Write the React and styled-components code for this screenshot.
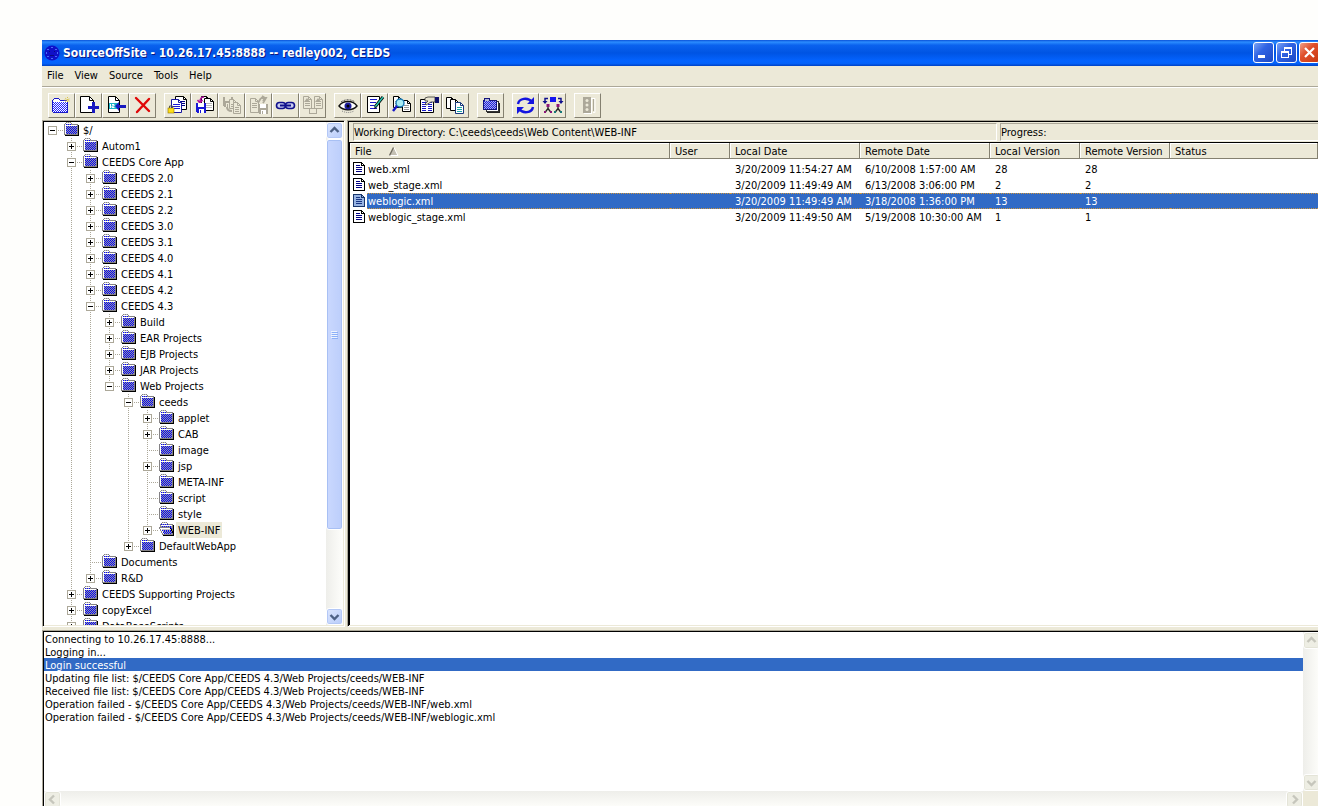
import React, { useState } from "react";
import styled, { createGlobalStyle, css } from "styled-components";

const menus = ["File", "View", "Source", "Tools", "Help"];

const columns = [
  { key: "file", text: "File", width: 320 },
  { key: "user", text: "User", width: 60 },
  { key: "localDate", text: "Local Date", width: 130 },
  { key: "remoteDate", text: "Remote Date", width: 130 },
  { key: "localVersion", text: "Local Version", width: 90 },
  { key: "remoteVersion", text: "Remote Version", width: 90 },
  { key: "status", text: "Status" },
];

const files = [
  { file: "web.xml", localDate: "3/20/2009 11:54:27 AM", remoteDate: "6/10/2008 1:57:00 AM", localVersion: "28", remoteVersion: "28" },
  { file: "web_stage.xml", localDate: "3/20/2009 11:49:49 AM", remoteDate: "6/13/2008 3:06:00 PM", localVersion: "2", remoteVersion: "2" },
  { file: "weblogic.xml", localDate: "3/20/2009 11:49:49 AM", remoteDate: "3/18/2008 1:36:00 PM", localVersion: "13", remoteVersion: "13" },
  { file: "weblogic_stage.xml", localDate: "3/20/2009 11:49:50 AM", remoteDate: "5/19/2008 10:30:00 AM", localVersion: "1", remoteVersion: "1" },
];

const messages = [
  "Connecting to 10.26.17.45:8888...",
  "Logging in...",
  "Login successful",
  "Updating file list: $/CEEDS Core App/CEEDS 4.3/Web Projects/ceeds/WEB-INF",
  "Received file list: $/CEEDS Core App/CEEDS 4.3/Web Projects/ceeds/WEB-INF",
  "Operation failed - $/CEEDS Core App/CEEDS 4.3/Web Projects/ceeds/WEB-INF/web.xml",
  "Operation failed - $/CEEDS Core App/CEEDS 4.3/Web Projects/ceeds/WEB-INF/weblogic.xml",
];

// closed: has children that are not shown, leaf: no expander
const closed = (name) => ({ name, state: "closed" });
const leaf = (name) => ({ name, state: "leaf" });
const open = (name, children) => ({ name, state: "open", children });

const tree = open("$/", [
  closed("Autom1"),
  open("CEEDS Core App", [
    closed("CEEDS 2.0"),
    closed("CEEDS 2.1"),
    closed("CEEDS 2.2"),
    closed("CEEDS 3.0"),
    closed("CEEDS 3.1"),
    closed("CEEDS 4.0"),
    closed("CEEDS 4.1"),
    closed("CEEDS 4.2"),
    open("CEEDS 4.3", [
      closed("Build"),
      closed("EAR Projects"),
      closed("EJB Projects"),
      closed("JAR Projects"),
      open("Web Projects", [
        open("ceeds", [
          closed("applet"),
          closed("CAB"),
          leaf("image"),
          closed("jsp"),
          leaf("META-INF"),
          leaf("script"),
          leaf("style"),
          closed("WEB-INF"),
        ]),
        closed("DefaultWebApp"),
      ]),
    ]),
    leaf("Documents"),
    closed("R&D"),
  ]),
  closed("CEEDS Supporting Projects"),
  closed("copyExcel"),
  closed("DataBaseScripts"),
]);

/* ---------- drawings ---------- */

const palette = {
  k: "#000000",
  g: "#848284",
  w: "#ffffff",
  b: "#0000ff",
  c: "#9c9c9c",
  n: "#000084",
  s: "#c6c3c6",
};

const Pixels = ({ rows, colors = palette }) => (
  <svg width={rows[0].length} height={rows.length} shapeRendering="crispEdges" aria-hidden="true">
    {rows.map((row, y) =>
      row.split("").map((ch, x) =>
        ch === "." ? null : <rect key={`${x}-${y}`} x={x} y={y} width="1" height="1" fill={colors[ch]} />
      )
    )}
  </svg>
);

const folderRows = [
  "..gsgsg........",
  ".gwwwwwg.......",
  "gwbcbcbcgggggg.",
  "gwwwwwwwwwwwwgk",
  "gwbcbcbcbcbcbgk",
  "gwcbcbcbcbcbcgk",
  "gwbcbcbcbcbcbgk",
  "gwcbcbcbcbcbcgk",
  "gwbcbcbcbcbcbgk",
  "gwcbcbcbcbcbcgk",
  "gwbcbcbcbcbcbgk",
  "gwcbcbcbcbcbcgk",
  "ggggggggggggggk",
  ".kkkkkkkkkkkkkk",
];

const openFolderRows = [
  "...gsgsg.......",
  "..gwwwwwg......",
  ".gbcbcbcbggggg.",
  ".gwwwwwwwwwwwgk",
  ".gcbcbcbcbcbcgk",
  "gggggggggggbcgk",
  "gwwwwwwwwwwkbgk",
  ".gwssssssssskgk",
  ".gwbcbcbcbcbkgk",
  "..gwcbcbcbcbckk",
  "..gwbcbcbcbcbkk",
  "...gwbcbcbcbcgk",
  "...gggggggggggk",
  "....kkkkkkkkkkk",
];

const pageRows = [
  "kkkkkkkkk...",
  "kwwwwwwwkk..",
  "kwwwwwwwkwk.",
  "kwwnnnnwkkkk",
  "kwwwwwwwwwwk",
  "kwwnnnnnnwwk",
  "kwwwwwwwwwwk",
  "kwwnnnnnnwwk",
  "kwwwwwwwwwwk",
  "kwwnnnnnnwwk",
  "kwwwwwwwwwwk",
  "kwwwwwwwwwwk",
  "kkkkkkkkkkkk",
];

const tinted = { ...palette, k: "#18356a", w: "#98b4e2", n: "#183584" };

const AppIcon = () => (
  <svg width="16" height="16" viewBox="0 0 16 16" aria-hidden="true">
    <circle cx="8" cy="8" r="7.5" fill="#1010c8" />
    <g fill="#4a6cf7" shapeRendering="crispEdges">
      <path d="M7 2h2v1H7zM3 4h2v1H3zM11 4h2v1h-2zM2 7h1v2H2zM13 7h1v2h-1zM3 11h2v1H3zM11 11h2v1h-2zM7 13h2v1H7z" />
    </g>
    <path d="M5 6h1v1H5zM10 6h1v1h-1zM6 10h4v1H6z" fill="#0a0a80" />
  </svg>
);

const Page = ({ x, y, w = 10, h = 13, line = "#000084", edge = "#000", fill = "#fff" }) => (
  <g>
    <path d={`M${x + 0.5} ${y + 0.5}h${w - 4}l3 3v${h - 4}h-${w - 1}z`} fill={fill} stroke={edge} />
    <path d={`M${x + w - 3.5} ${y + 0.5}v3h3`} fill="none" stroke={edge} />
    {[5, 7, 9].map((d) => (
      <path key={d} d={`M${x + 2} ${y + d + 0.5}h${w - 4}`} stroke={line} />
    ))}
  </g>
);

const Floppy = ({ x, y, color = "#1818d6", label = "#fff" }) => (
  <g shapeRendering="crispEdges">
    <path d={`M${x} ${y}h9l1 1v9h-9l-1-1z`} fill={color} />
    <rect x={x + 2} y={y} width="6" height="4" fill={label} />
    <rect x={x + 3} y={y + 6} width="5" height="4" fill={label} />
    <rect x={x + 4} y={y + 7} width="1" height="3" fill={color} />
  </g>
);

const grey = "#aca899";
const face = "#ece9d8";

const glyphs = {
  newProject: (
    <>
      <g shapeRendering="crispEdges">
        <path d="M4 8h1V6h6v2h8v11H4z" fill="#fff" />
        {[...Array(10)].map((_, r) =>
          [...Array(7)].map((_, c) => (
            <rect key={`${r}-${c}`} x={4 + c * 2 + (r % 2)} y={9 + r} width="1" height="1" fill="#2222ff" />
          ))
        )}
        <path d="M3 7h1v12H3zM4 6h1v1H4zM5 5h5v1H5zM10 6h1v1h-1zM11 7h7v1h-7zM18 8h1v11h-1zM4 19h15v1H4z" fill="#1818c8" />
      </g>
      <path d="M18.5 4v6M15.5 7h6M16 5l5 4M16 9l5-4" stroke="#d8c44c" strokeWidth="1" strokeDasharray="1 1" />
    </>
  ),
  addFile: (
    <>
      <path d="M4.5 3.5h9l4 4v12h-13z" fill="#fff" stroke="#000" />
      <path d="M13.5 3.5v4h4" fill="none" stroke="#000" />
      <path d="M16 9h3v4h4v3h-4v4h-3v-4h-4v-3h4z" fill="#1818c0" />
    </>
  ),
  history: (
    <>
      <path d="M5.500 3.500h7l4 4v12h-11z" fill="#fff" stroke="#000" />
      <path d="M12.500 3.500v4h4" fill="none" stroke="#000" />
      <rect x="6" y="10" width="10" height="6" fill="#19b4c8" />
      <path d="M7.500 11v4M9 11.500h2v1.500h-2v1.500h2.500" fill="none" stroke="#fff" />
      <path d="M12 13l4-4v3h7v3h-7v3z" fill="#1818c0" />
    </>
  ),
  remove: <path d="M6 5l13 13M19 6L7 19" stroke="#e00808" strokeWidth="2.4" strokeLinecap="round" />,
  checkOut: (
    <>
      <Page x={10} y={3} w={12} h={14} />
      <Page x={6} y={6} w={11} h={14} line="#1818d6" edge="#1818a0" />
      <path d="M4.500 15v-2h3v2" fill="none" stroke="#555" />
      <rect x="3" y="15" width="6" height="5" fill="#ffde18" stroke="#8c7400" strokeWidth="0.6" />
    </>
  ),
  checkIn: (
    <>
      <Page x={9} y={3} w={9} h={13} line="#bbb" />
      <Page x={12} y={5} w={10} h={13} line="#bbb" />
      <path d="M12 4c-3 0-4 2-4 5M5.500 7l2.500 3 2.500-3" fill="none" stroke="#b0109c" strokeWidth="1.500" />
      <Floppy x={4} y={10} />
    </>
  ),
  undo: (
    <>
      <Floppy x={4} y={4} color={grey} label={face} />
      <Page x={10} y={6} w={8} h={10} line={grey} edge={grey} fill={face} />
      <Page x={14} y={9} w={8} h={12} line={grey} edge={grey} fill={face} />
      <path d="M8 14c0 3 2 4 5 4" fill="none" stroke={grey} strokeWidth="2" />
    </>
  ),
  getLatest: (
    <>
      <Page x={4} y={5} w={9} h={15} line={grey} edge={grey} fill={face} />
      <Floppy x={12} y={11} color={grey} label="#fff" />
      <path d="M12 10l3-5M15 5h5l-3 5M16 3l3 2-2 3" fill="none" stroke={grey} strokeWidth="1.800" />
    </>
  ),
  link: (
    <>
      <rect x="3.500" y="9.500" width="9" height="6" rx="3" fill="#c9ccf0" stroke="#10108c" strokeWidth="1.600" />
      <rect x="12.500" y="9.500" width="9" height="6" rx="3" fill="#c9ccf0" stroke="#10108c" strokeWidth="1.600" />
      <path d="M7 12.500h11" stroke="#10108c" strokeWidth="2" />
    </>
  ),
  branch: (
    <>
      <Page x={3} y={3} w={9} h={13} line={grey} edge={grey} fill={face} />
      <Page x={14} y={3} w={9} h={13} line={grey} edge={grey} fill={face} />
      <rect x="9.500" y="15.500" width="7" height="5" fill={face} stroke={grey} />
      <path d="M4 9l3-4 3 4zM15 9l3-4 3 4z" fill={grey} />
    </>
  ),
  view: (
    <>
      <path d="M4 13c4-6 14-6 18 0-4 5-14 5-18 0z" fill="#fff" stroke="#111" strokeWidth="1.400" />
      <circle cx="13" cy="13" r="3.500" fill="#1c1c9c" />
      <circle cx="13" cy="13" r="1.500" fill="#000" />
      <path d="M6 9c4-3 10-3 14 0" fill="none" stroke="#555" strokeDasharray="2 1" />
      <path d="M7 18c4 2 8 2 12 0" fill="none" stroke="#888" strokeDasharray="1 1" />
    </>
  ),
  edit: (
    <>
      <path d="M5.500 3.500h12v16h-12z" fill="#fff" stroke="#000" />
      <path d="M8 6.500h7M8 9.500h6M8 12.500h4M8 15.500h7" stroke="#1818c8" />
      <path d="M21 4l-8 10" stroke="#000" strokeWidth="3" />
      <path d="M21 4l-8 10" stroke="#28c8b4" strokeWidth="1.400" />
      <path d="M13 13l-1 3 2-1z" fill="#000" />
    </>
  ),
  diff: (
    <>
      <Page x={4} y={3} w={9} h={12} line="#999" />
      <Page x={13} y={7} w={9} h={12} line="#999" />
      <circle cx="11" cy="10" r="4" fill="#a8ecf4" stroke="#1878b4" strokeWidth="1.400" />
      <path d="M8 13l-4 5" stroke="#1818c8" strokeWidth="2.400" />
    </>
  ),
  properties: (
    <>
      <path d="M4.500 6.500h13v13h-13z" fill="#fff" stroke="#000" />
      <path d="M6 9.500h4M12 9.500h4M6 11.500h4M12 11.500h4M6 13.500h4M12 13.500h4M6 15.500h4M12 15.500h4M6 17.500h4M12 17.500h4" stroke="#1818c8" />
      <path d="M9 5l3-1h7v5h-4l-5 3-1-1 3-3H9z" fill="#e8e4d0" stroke="#333" strokeWidth="0.800" />
      <rect x="19" y="4" width="4" height="6" fill="#10106c" />
    </>
  ),
  copies: (
    <>
      <Page x={3} y={4} w={9} h={12} line="#fff" />
      <Page x={7} y={6} w={9} h={12} line="#fff" />
      <Page x={12} y={9} w={9} h={12} line="#18a8a8" edge="#18387c" />
    </>
  ),
  projects: (
    <g shapeRendering="crispEdges">
      <path d="M10 10h12v10H9v-2h1z" fill="#222" />
      <path d="M8 8h12v10H8z" fill="#fff" stroke="#333" />
      <path d="M5 7h1V5h5v2h7v9H5z" fill="#b4b8d8" stroke="#14147c" />
      {[...Array(8)].map((_, r) =>
        [...Array(6)].map((_, c) => (
          <rect key={`${r}-${c}`} x={6 + c * 2 + (r % 2)} y={8 + r} width="1" height="1" fill="#1818f0" />
        ))
      )}
    </g>
  ),
  refresh: (
    <>
      <path d="M5 11c1-6 10-7 14-2M20 14c-1 6-10 7-14 2" fill="none" stroke="#1414e0" strokeWidth="2.400" />
      <path d="M21 4v7h-7zM4 21v-7h7z" fill="#1414e0" />
    </>
  ),
  sync: (
    <>
      <rect x="10" y="4" width="6" height="5" fill="#1414f0" />
      <path d="M8 5.500H5v4M18 5.500h3v4" fill="none" stroke="#10108c" strokeWidth="1.500" />
      <path d="M2.500 8h5L5 11zM18.500 8h5L21 11z" fill="#10108c" />
      <path d="M8 13.500v2l-3 4M8 15.500l3 4M18 13.500v2l-3 4M18 15.500l3 4" fill="none" stroke="#222" strokeWidth="1.300" />
      <rect x="6.500" y="11" width="3" height="3" fill="#8c1478" />
      <rect x="16.500" y="11" width="3" height="3" fill="#8c1478" />
      <path d="M4 18h2v2H4zM10 18h2v2h-2z" fill="#8c1478" />
      <path d="M14 18h2v2h-2zM20 18h2v2h-2z" fill="#167878" />
    </>
  ),
  stop: (
    <>
      <rect x="8" y="4" width="8" height="16" fill={grey} />
      <path d="M16.500 5v15M9 20.500h8M17 5.500h3v14h-2" fill="none" stroke="#fff" />
      <path d="M18.500 6v12" stroke={grey} />
      <circle cx="12" cy="7.500" r="1.500" fill={face} />
      <circle cx="12" cy="12" r="1.500" fill={face} />
      <circle cx="12" cy="16.500" r="1.500" fill={face} />
    </>
  ),
};

const toolGroups = [
  [["newProject", "New project"], ["addFile", "Add file"], ["history", "Update"], ["remove", "Delete"]],
  [
    ["checkOut", "Check out"],
    ["checkIn", "Check in"],
    ["undo", "Undo check out", true],
    ["getLatest", "Get latest", true],
    ["link", "Share"],
    ["branch", "Branch", true],
  ],
  [["view", "View"], ["edit", "Edit"], ["diff", "Differences"], ["properties", "Properties"], ["copies", "History"]],
  [["projects", "Project history"]],
  [["refresh", "Refresh"], ["sync", "Synchronize"]],
  [["stop", "Stop", true]],
];

const arrows = {
  up: "M4.500 10l4-4 4 4",
  down: "M4.500 7l4 4 4-4",
  left: "M10 4.500l-4 4 4 4",
  right: "M7 4.500l4 4-4 4",
};

/* ---------- styles ---------- */

const GlobalStyle = createGlobalStyle`
  * {
    box-sizing: border-box;
  }
  body {
    margin: 0;
    background: #fefefc;
    color: #000;
    font-family: "DejaVu Sans Condensed", Tahoma, sans-serif;
    font-size: 11px;
    line-height: 18px;
  }
  button {
    padding: 0;
    font: inherit;
    color: inherit;
  }
  svg {
    display: block;
  }
  ul {
    margin: 0;
    padding: 0;
    list-style: none;
  }
`;

/* the window runs slightly past the right and bottom of the page */
const Desktop = styled.div`
  display: flex;
  height: 100vh;
  padding: 40px 0 0 42px;
  overflow: hidden;
`;

const Window = styled.div`
  flex: 1;
  min-width: 0;
  display: flex;
  flex-direction: column;
  margin: 0 -4px -4px 0;
  background: #ece9d8;
`;

const TitleBar = styled.header`
  display: flex;
  align-items: center;
  gap: 3px;
  height: 26px;
  padding: 0 2px 1px 2px;
  background: linear-gradient(#0a52d8 0, #2b8cff 8%, #0a62ee 20%, #0054e3 50%, #0463ff 80%, #0462fa 90%, #0042c4 100%);

  h1 {
    flex: 1;
    margin: 0;
    color: #fff;
    font-size: 12px;
    font-weight: 700;
    line-height: 26px;
    text-shadow: 1px 1px 0 #0a1883;
  }
`;

const CaptionButtons = styled.div`
  display: flex;
  gap: 2px;
`;

const CaptionButton = styled.button`
  width: 21px;
  height: 21px;
  border: 1px solid #fff;
  border-radius: 3px;
  background: ${({ $close }) =>
    $close
      ? "linear-gradient(135deg, #f0a088 0, #e0502c 40%, #c83810 100%)"
      : "linear-gradient(135deg, #7ca4f4 0, #3064e4 40%, #1c48c4 100%)"};
`;

const MenuBar = styled.nav`
  display: flex;
  height: 22px;
  padding: 1px 0 0 5px;
  gap: 11px;
  border-bottom: 1px solid #fff;
  box-shadow: inset 0 -1px #aca899;

  button {
    height: 18px;
    border: 0;
    background: none;
  }
`;

const ToolBar = styled.div`
  display: flex;
  gap: 8px;
  height: 32px;
  padding: 5px 6px 0;
`;

const ToolGroup = styled.div`
  display: flex;
`;

const ToolButton = styled.button`
  width: 27px;
  height: 25px;
  border: 1px solid;
  border-color: #fff #848070 #848070 #fff;
  background: #ece9d8;
`;

const Panes = styled.main`
  flex: 1;
  min-height: 0;
  display: flex;
  gap: 2px;
`;

const sunken = css`
  border: 1px solid;
  border-color: #aca899 #fff #fff #aca899;
  box-shadow: inset 1px 1px #000, inset -1px -1px #ece9d8;
  padding: 1px;
`;

const TreePane = styled.section`
  ${sunken}
  flex: 0 0 303px;
  display: flex;
  background: #fff;
`;

const TreeList = styled.ul`
  flex: 1;
  min-width: 0;
  overflow: hidden;
`;

const TreeRow = styled.li`
  display: flex;
  height: 16px;

  > svg {
    flex: none;
  }
`;

const Expander = styled.button`
  height: 16px;
  border: 0;
  background: none;
`;

const FolderLabel = styled.span`
  display: flex;
  gap: 2px;
  padding-left: 1px;
`;

const NodeName = styled.span`
  height: 16px;
  padding: 0 2px;
  white-space: nowrap;
  background: ${({ $selected }) => ($selected ? "#ece9d8" : "transparent")};
`;

const FilePane = styled.section`
  ${sunken}
  flex: 1;
  min-width: 0;
  display: flex;
  flex-direction: column;
  background: #fff;
`;

const InfoBar = styled.div`
  display: flex;
  gap: 3px;
  height: 20px;
  padding: 1px 0 1px 4px;
  background: #ece9d8;
`;

const InfoBox = styled.div`
  flex: ${({ $width }) => ($width ? `0 0 ${$width}px` : "1")};
  border: 1px solid;
  border-color: #aca899 #fff #fff #aca899;
  white-space: nowrap;
`;

const TableWrap = styled.div`
  flex: 1;
  padding-right: 2px;
  border: solid #000;
  border-width: 1px 0 0 1px;
`;

const Table = styled.table`
  width: 100%;
  table-layout: fixed;
  border-collapse: separate;
  border-spacing: 0;

  th {
    height: 16px;
    padding: 0 0 0 5px;
    border: solid;
    border-width: 0 1px 1px 0;
    border-color: #848070;
    box-shadow: inset 1px 1px #fff;
    background: #ece9d8;
    font-weight: 400;
    text-align: left;
    white-space: nowrap;
  }
  td {
    padding: 0;
    white-space: nowrap;
  }
`;

const HeadLabel = styled.span`
  display: flex;
  gap: 18px;
  height: 15px;

  svg {
    margin-top: 4px;
  }
`;

const FileRow = styled.tr`
  cursor: default;
`;

const Cell = styled.div`
  flex: 1;
  height: 16px;
  padding-left: ${({ $name }) => ($name ? "1px" : "5px")};
  ${({ $selected }) =>
    $selected &&
    css`
      background: #316ac5;
      color: #fff;
      border: dotted #ce953a;
      border-width: 1px 0;
      line-height: 16px;
    `}
`;

const FileName = styled.div`
  display: flex;
  gap: 2px;
  padding-left: 3px;

  svg {
    margin-top: 1px;
  }
`;

const Spacer = styled.div`
  height: 2px;
`;

const LogPane = styled.section`
  ${sunken}
  flex: none;
  display: grid;
  grid-template: 159px 17px / 1fr 17px;
  margin-top: 3px;
  background: #fff;
`;

const LogList = styled.ul`
  overflow: hidden;
`;

const LogLine = styled.li`
  height: 13px;
  padding-left: 1px;
  line-height: 15px;
  white-space: nowrap;
  background: ${({ $selected }) => ($selected ? "#316ac5" : "transparent")};
  color: ${({ $selected }) => ($selected ? "#fff" : "#000")};
`;

const Corner = styled.div`
  background: #ece9d8;
`;

const Scroll = styled.div`
  display: flex;
  flex: none;
  ${({ $horizontal }) =>
    $horizontal
      ? css`
          height: 17px;
          background: linear-gradient(#eeeeea, #fefefb);
        `
      : css`
          flex-direction: column;
          width: 17px;
          background: linear-gradient(90deg, #eeeeea, #fefefb);
        `}
`;

const ScrollButton = styled.button`
  width: 17px;
  height: 17px;
  border: 1px solid #fff;
  border-radius: 3px;
  box-shadow: inset 0 0 0 1px ${({ disabled }) => (disabled ? "#e4e4d8" : "#b4c8f6")};
  background: ${({ disabled }) => (disabled ? "#eeeee4" : "linear-gradient(135deg, #dce6fe, #b8ccfa)")};
`;

const ScrollTrack = styled.div`
  flex: 1;
  display: flex;
  flex-direction: column;
`;

const ScrollThumb = styled.div`
  flex: 5;
  display: flex;
  align-items: center;
  justify-content: center;
  border: 1px solid #fff;
  border-radius: 3px;
  box-shadow: inset 0 0 0 1px #a8c0f4;
  background: linear-gradient(90deg, #cad8fe, #bccefb);
`;

const ScrollRest = styled.div`
  flex: 1;
`;

/* ---------- parts ---------- */

const Arrow = ({ dir, disabled }) => (
  <ScrollButton disabled={disabled} aria-label={`Scroll ${dir}`}>
    <svg width="15" height="15" viewBox="1 1 15 15">
      <path d={arrows[dir]} fill="none" stroke={disabled ? "#c6c6bc" : "#4d6185"} strokeWidth="2.400" />
    </svg>
  </ScrollButton>
);

const TreeScroll = () => (
  <Scroll>
    <Arrow dir="up" />
    <ScrollTrack>
      <ScrollThumb>
        <svg width="7" height="8" shapeRendering="crispEdges">
          <path d="M0 0h6v1H0zM0 2h6v1H0zM0 4h6v1H0zM0 6h6v1H0z" fill="#eef4fe" />
          <path d="M1 1h6v1H1zM1 3h6v1H1zM1 5h6v1H1zM1 7h6v1H1z" fill="#8cb0f8" />
        </svg>
      </ScrollThumb>
      <ScrollRest />
    </ScrollTrack>
    <Arrow dir="down" />
  </Scroll>
);

// one 19px column of the dotted connector lines
const Guide = ({ line }) => (
  <svg width="19" height="16" shapeRendering="crispEdges" aria-hidden="true">
    {line && <path d="M8.500 0v16" stroke="#aca899" strokeDasharray="1 1" />}
  </svg>
);

const Branch = ({ state, first, last }) => (
  <svg width="19" height="16" shapeRendering="crispEdges" aria-hidden="true">
    <path
      d={`M8.500 ${first ? 8 : 0}V${last ? 9 : 16}M8 8.500h11`}
      fill="none"
      stroke="#aca899"
      strokeDasharray="1 1"
    />
    {state !== "leaf" && (
      <>
        <rect x="4.500" y="4.500" width="8" height="8" fill="#fff" stroke="#aca899" />
        <path d={state === "closed" ? "M6 8.500h5M8.500 6v5" : "M6 8.500h5"} stroke="#000" />
      </>
    )}
  </svg>
);

const TreeNode = ({ node, guides = [], root, last, selected, onSelect }) => (
  <>
    <TreeRow>
      {guides.map((line, i) => (
        <Guide key={i} line={line} />
      ))}
      {node.state === "leaf" ? (
        <Branch state="leaf" last={last} />
      ) : (
        <Expander aria-label={`Expand ${node.name}`}>
          <Branch state={node.state} first={root} last={last} />
        </Expander>
      )}
      <FolderLabel onClick={() => onSelect(node.name)}>
        <Pixels rows={selected === node.name ? openFolderRows : folderRows} />
        <NodeName $selected={selected === node.name}>{node.name}</NodeName>
      </FolderLabel>
    </TreeRow>
    {node.children?.map((child, i) => (
      <TreeNode
        key={child.name}
        node={child}
        guides={[...guides, !last]}
        last={!root && i === node.children.length - 1}
        selected={selected}
        onSelect={onSelect}
      />
    ))}
  </>
);

export default function App() {
  const [folder, setFolder] = useState("WEB-INF");
  const [file, setFile] = useState("weblogic.xml");

  return (
    <>
      <GlobalStyle />
      <Desktop>
        <Window>
          <TitleBar>
            <AppIcon />
            <h1>SourceOffSite - 10.26.17.45:8888 -- redley002, CEEDS</h1>
            <CaptionButtons>
              <CaptionButton aria-label="Minimize">
                <svg width="19" height="19" shapeRendering="crispEdges">
                  <rect x="4" y="12" width="7" height="3" fill="#fff" />
                </svg>
              </CaptionButton>
              <CaptionButton aria-label="Restore">
                <svg width="19" height="19" shapeRendering="crispEdges">
                  <path d="M7 4h8v8h-3v-1h2V6H8v2H7zM4 8h8v7H4zM5 10v4h6v-4z" fill="#fff" fillRule="evenodd" />
                </svg>
              </CaptionButton>
              <CaptionButton $close aria-label="Close">
                <svg width="19" height="19">
                  <path d="M5 5l9 9M14 5l-9 9" stroke="#fff" strokeWidth="2.200" />
                </svg>
              </CaptionButton>
            </CaptionButtons>
          </TitleBar>

          <MenuBar>
            {menus.map((text) => (
              <button key={text}>{text}</button>
            ))}
          </MenuBar>

          <ToolBar>
            {toolGroups.map((group, i) => (
              <ToolGroup key={i}>
                {group.map(([name, label, disabled]) => (
                  <ToolButton key={name} aria-label={label} disabled={disabled}>
                    <svg width="25" height="23" viewBox="0 1 25 23" fill="none">
                      {glyphs[name]}
                    </svg>
                  </ToolButton>
                ))}
              </ToolGroup>
            ))}
          </ToolBar>

          <Panes>
            <TreePane>
              <TreeList>
                <TreeNode node={tree} root last selected={folder} onSelect={setFolder} />
              </TreeList>
              <TreeScroll />
            </TreePane>

            <FilePane>
              <InfoBar>
                <InfoBox>Working Directory: C:\ceeds\ceeds\Web Content\WEB-INF</InfoBox>
                <InfoBox $width={320}>Progress:</InfoBox>
              </InfoBar>
              <TableWrap>
                <Table>
                  <colgroup>
                    {columns.map((col) => (
                      <col key={col.key} width={col.width} />
                    ))}
                  </colgroup>
                  <thead>
                    <tr>
                      {columns.map((col) => (
                        <th key={col.key} scope="col">
                          <HeadLabel>
                            {col.text}
                            {col.key === "file" && (
                              <svg width="10" height="9">
                                <path d="M1 8L5 1l3 7z" fill="#c4c0b4" />
                                <path d="M5 0.500L9 8.500H0" fill="none" stroke="#fff" />
                                <path d="M0.500 8.500L4.500 0.500" stroke="#6c685c" strokeWidth="1.400" />
                              </svg>
                            )}
                          </HeadLabel>
                        </th>
                      ))}
                    </tr>
                  </thead>
                  <tbody>
                    <tr>
                      <td colSpan={columns.length}>
                        <Spacer />
                      </td>
                    </tr>
                    {files.map((row) => {
                      const selected = row.file === file;
                      return (
                        <FileRow key={row.file} onClick={() => setFile(row.file)}>
                          {columns.map(({ key }) => (
                            <td key={key}>
                              {key === "file" ? (
                                <FileName>
                                  <Pixels rows={pageRows} colors={selected ? tinted : palette} />
                                  <Cell $name $selected={selected}>
                                    {row.file}
                                  </Cell>
                                </FileName>
                              ) : (
                                <Cell $selected={selected}>{row[key]}</Cell>
                              )}
                            </td>
                          ))}
                        </FileRow>
                      );
                    })}
                  </tbody>
                </Table>
              </TableWrap>
            </FilePane>
          </Panes>

          <LogPane>
            <LogList>
              {messages.map((text) => (
                <LogLine key={text} $selected={text === "Login successful"}>
                  {text}
                </LogLine>
              ))}
            </LogList>
            <Scroll>
              <Arrow dir="up" disabled />
              <ScrollTrack />
              <Arrow dir="down" disabled />
            </Scroll>
            <Scroll $horizontal>
              <Arrow dir="left" disabled />
              <ScrollTrack />
              <Arrow dir="right" disabled />
            </Scroll>
            <Corner />
          </LogPane>
        </Window>
      </Desktop>
    </>
  );
}
